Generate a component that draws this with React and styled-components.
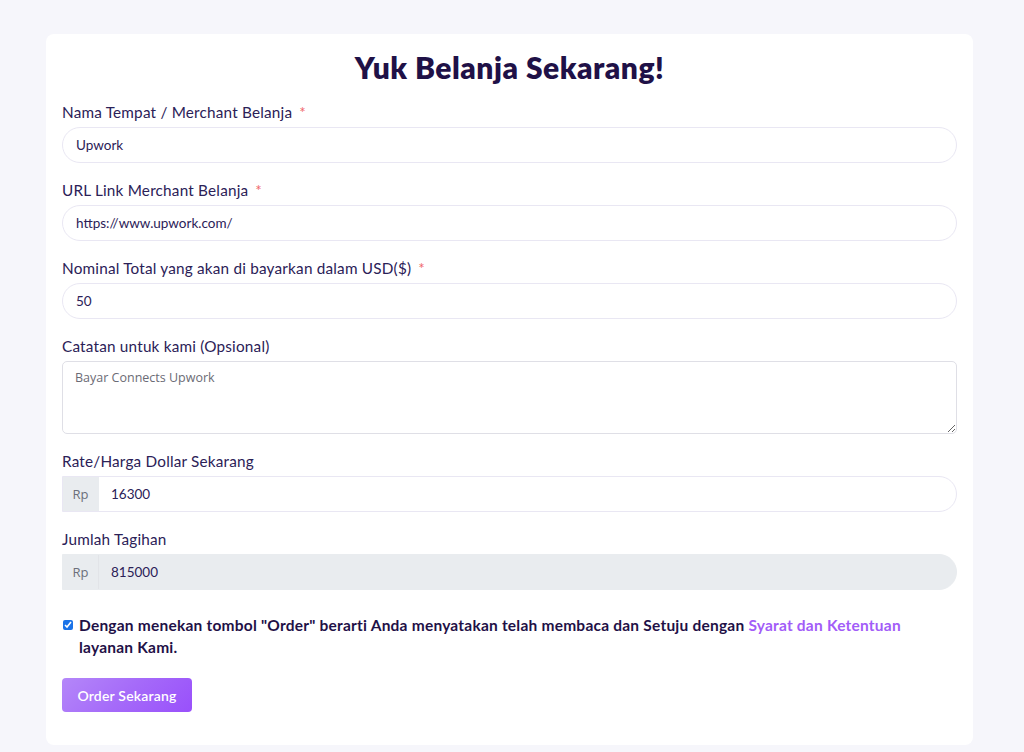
import React from "react";
import styled, { createGlobalStyle } from "styled-components";

const Global = createGlobalStyle`
  html, body { margin: 0; padding: 0; background: #f6f6fb; }
  body { font-family: Lato, "Noto Sans", sans-serif; }
  * { box-sizing: border-box; }
`;

const Page = styled.div`
  padding: 34px 51px 0 46px;
`;

const Card = styled.form`
  background: #fff;
  border-radius: 8px;
  padding: 16px 16px 33px;
`;

const Title = styled.h1`
  margin: 0 0 17px;
  text-align: center;
  font-size: 30px;
  line-height: 34px;
  font-weight: 800;
  letter-spacing: 0.5px;
  color: #1f1147;
`;

const Field = styled.div`
  margin-bottom: 16px;
`;

const Label = styled.label`
  display: block;
  font-size: 15.3px;
  line-height: 22px;
  letter-spacing: 0.2px;
  margin-bottom: 4px;
  color: #2b2157;
`;

const Star = styled.span`
  color: #f0676b;
  margin-left: 7px;
`;

const Input = styled.input`
  display: block;
  width: 100%;
  height: 36px;
  padding: 0 13px;
  border: 1px solid #e9e7f3;
  border-radius: 18px;
  font-family: Lato, sans-serif;
  font-size: 13.5px;
  color: #2b2157;
  background: #fff;
  outline: none;
`;

const TextArea = styled.textarea`
  display: block;
  width: 100%;
  height: 73px;
  padding: 7px 12px;
  border: 1px solid #dfdfe6;
  border-radius: 5px;
  font-family: "Open Sans", sans-serif;
  font-size: 12.5px;
  color: #6b6b75;
  resize: vertical;
  outline: none;
`;

const Group = styled.div`
  display: flex;
  height: 36px;
  border: 1px solid ${(p) => (p.$disabled ? "#e9ecef" : "#e9e7f3")};
  border-radius: 0 18px 18px 0;
  background: ${(p) => (p.$disabled ? "#e9ecef" : "#fff")};
  overflow: hidden;
`;

const Addon = styled.span`
  display: flex;
  align-items: center;
  justify-content: center;
  width: 36px;
  background: #e9ecef;
  border-right: 1px solid ${(p) => (p.$disabled ? "#e2e4e8" : "#e9ecef")};
  font-family: "Open Sans", sans-serif;
  font-size: 13px;
  color: #6c6f7a;
`;

const GroupInput = styled.input`
  flex: 1;
  border: 0;
  padding: 0 12px;
  background: transparent;
  font-family: Lato, sans-serif;
  font-size: 13.5px;
  color: #2b2157;
  outline: none;
`;

const Agree = styled.label`
  display: flex;
  align-items: flex-start;
  gap: 6px;
  margin: 24px 0 20px;
  font-size: 15.5px;
  line-height: 22px;
  letter-spacing: 0.22px;
  font-weight: 700;
  color: #1f1147;
`;

const Check = styled.input`
  margin: 6px 0 0 1px;
  width: 10px;
  height: 10px;
  flex: none;
  accent-color: #1a73e8;
`;

const Link = styled.a`
  color: #a25cf8;
  text-decoration: none;
`;

const Button = styled.button`
  height: 34px;
  width: 130px;
  border: 0;
  border-radius: 4px;
  background: linear-gradient(135deg, #b487f9 0%, #a56af9 50%, #9950fb 100%);
  color: #fff;
  font-family: Lato, sans-serif;
  font-size: 14px;
  font-weight: 600;
  letter-spacing: 0.2px;
`;

export default function App() {
  return (
    <Page>
      <Global />
      <Card onSubmit={(e) => e.preventDefault()}>
        <Title>Yuk Belanja Sekarang!</Title>
        <Field>
          <Label>
            Nama Tempat / Merchant Belanja<Star>*</Star>
          </Label>
          <Input defaultValue="Upwork" />
        </Field>
        <Field>
          <Label>
            URL Link Merchant Belanja<Star>*</Star>
          </Label>
          <Input defaultValue="https://www.upwork.com/" />
        </Field>
        <Field>
          <Label>
            Nominal Total yang akan di bayarkan dalam USD($)<Star>*</Star>
          </Label>
          <Input defaultValue="50" />
        </Field>
        <Field>
          <Label>Catatan untuk kami (Opsional)</Label>
          <TextArea defaultValue="Bayar Connects Upwork" />
        </Field>
        <Field>
          <Label>Rate/Harga Dollar Sekarang</Label>
          <Group>
            <Addon>Rp</Addon>
            <GroupInput defaultValue="16300" />
          </Group>
        </Field>
        <Field>
          <Label>Jumlah Tagihan</Label>
          <Group $disabled>
            <Addon $disabled>Rp</Addon>
            <GroupInput defaultValue="815000" disabled />
          </Group>
        </Field>
        <Agree>
          <Check type="checkbox" defaultChecked />
          <span>
            Dengan menekan tombol "Order" berarti Anda menyatakan telah membaca dan
            Setuju dengan <Link href="#">Syarat dan Ketentuan</Link> layanan Kami.
          </span>
        </Agree>
        <Button type="submit">Order Sekarang</Button>
      </Card>
    </Page>
  );
}
